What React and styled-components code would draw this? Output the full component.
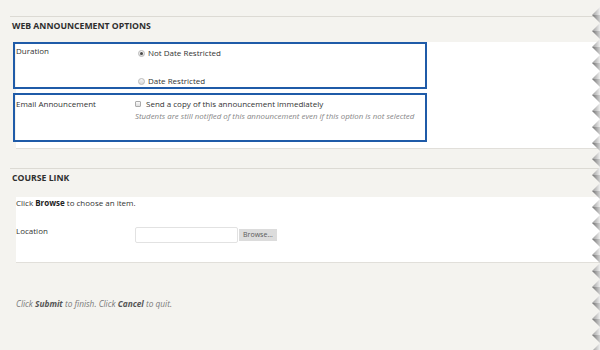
import React from "react";
import styled, { createGlobalStyle } from "styled-components";

const Global = createGlobalStyle`
  html, body { margin: 0; padding: 0; background: #f4f3ef; }
  body { font-family: "Open Sans", "DejaVu Sans", sans-serif; color: #333; }
  * { box-sizing: border-box; }
`;

const Page = styled.div`
  position: relative;
  width: 600px;
  height: 350px;
  overflow: hidden;
  background: #f4f3ef;
`;

const Main = styled.div`
  padding-top: 16px;
  display: flex;
  flex-direction: column;
`;

const SectionRule = styled.div`
  margin-left: 10px;
  margin-top: ${(p) => p.$gap || 0}px;
  border-top: 1px solid #dcdad4;
`;

const SectionTitle = styled.h2`
  margin: 0;
  height: ${(p) => p.$h}px;
  padding: 2px 0 0 12px;
  font-size: 8.7px;
  line-height: 14px;
  font-weight: 700;
  color: #2e2e2e;
  text-transform: uppercase;
`;

const Panel = styled.div`
  margin-left: 16px;
  background: #fff;
  border-bottom: 1px solid #e1dfda;
  padding-bottom: ${(p) => p.$pb}px;
  display: flex;
  flex-direction: column;
`;

const FieldBox = styled.div`
  margin-left: -3px;
  margin-top: ${(p) => p.$mt || 0}px;
  width: 414px;
  height: ${(p) => p.$h}px;
  border: 2px solid #1f5ba8;
  display: flex;
  align-items: flex-start;
`;

const Label = styled.div`
  width: 120px;
  flex: none;
  padding: ${(p) => p.$pt || 0}px 0 0 1px;
  font-size: 8px;
  line-height: 12px;
  color: #333;
`;

const Options = styled.div`
  display: flex;
  flex-direction: column;
  gap: ${(p) => p.$gap || 0}px;
  padding-top: 3px;
`;

const OptionRow = styled.label`
  display: flex;
  align-items: center;
  height: 12px;
  font-size: 8px;
  line-height: 12px;
  color: #333;
`;

const Radio = styled.span`
  position: relative;
  width: 7px;
  height: 7px;
  margin: 0 3px 0 3px;
  border-radius: 50%;
  border: 1px solid #b9b9b9;
  background: linear-gradient(#f7f7f7, #d9d9d9);
  flex: none;
  &::after {
    content: "";
    display: ${(p) => (p.$checked ? "block" : "none")};
    position: absolute;
    left: 1px;
    top: 1px;
    width: 3px;
    height: 3px;
    border-radius: 50%;
    background: #4a4a4a;
  }
`;

const Checkbox = styled.span`
  width: 6px;
  height: 6px;
  margin-right: 5px;
  border: 1px solid #ababab;
  border-radius: 1px;
  background: linear-gradient(#fbfbfb, #dedede);
  flex: none;
`;

const Note = styled.div`
  font-size: 7.9px;
  line-height: 12px;
  font-style: italic;
  color: #858585;
`;

const Intro = styled.div`
  font-size: 8px;
  line-height: 11px;
  color: #333;
  b { font-weight: 700; color: #222; }
`;

const FieldRow = styled.div`
  display: flex;
  align-items: flex-start;
  margin-top: 17px;
`;

const RowLabel = styled.div`
  width: 119px;
  flex: none;
  font-size: 8px;
  line-height: 12px;
  color: #333;
`;

const FileControl = styled.div`
  display: flex;
  align-items: center;
  margin-top: 2px;
`;

const TextInput = styled.div`
  width: 103px;
  height: 16px;
  border: 1px solid #e2e2e2;
  border-radius: 2px;
  background: #fff;
`;

const BrowseButton = styled.button`
  width: 38px;
  height: 12px;
  margin-left: 1px;
  padding: 0;
  border: none;
  background: #dcdcdc;
  color: #5a5a5a;
  font-family: "Open Sans", sans-serif;
  font-size: 7px;
  line-height: 12px;
`;

const Footer = styled.div`
  margin-top: 35px;
  padding-left: 16px;
  font-size: 8.3px;
  line-height: 12px;
  font-style: italic;
  color: #7a7a7a;
  b { font-weight: 700; color: #555; }
`;

const Edge = styled.svg`
  position: absolute;
  top: 7px;
  right: 0;
  width: 10px;
  height: 343px;
`;

function TornEdge() {
  return (
    <Edge viewBox="0 0 10 343" preserveAspectRatio="none">
      <defs>
        <linearGradient id="up" x1="0" x2="1" y1="0" y2="0">
          <stop offset="0" stopColor="#9a9a9a" />
          <stop offset="1" stopColor="#eeeeee" />
        </linearGradient>
        <linearGradient id="dn" x1="0" x2="1" y1="0" y2="0">
          <stop offset="0" stopColor="#6f6f6f" />
          <stop offset="1" stopColor="#d0d0d0" />
        </linearGradient>
        <pattern id="teeth" width="10" height="16" patternUnits="userSpaceOnUse">
          <polygon points="10,0 2,8 10,8" fill="url(#up)" />
          <polygon points="2,8 10,8 10,16" fill="url(#dn)" />
        </pattern>
      </defs>
      <rect x="0" y="0" width="10" height="343" fill="url(#teeth)" />
    </Edge>
  );
}

export default function App() {
  return (
    <Page>
      <Global />
      <Main>
        <SectionRule />
        <SectionTitle $h={25}>Web Announcement Options</SectionTitle>
        <Panel $pb={6}>
          <FieldBox $h={47}>
            <Label $pt={1}>Duration</Label>
            <Options $gap={16}>
              <OptionRow>
                <Radio $checked />
                Not Date Restricted
              </OptionRow>
              <OptionRow>
                <Radio />
                Date Restricted
              </OptionRow>
            </Options>
          </FieldBox>
          <FieldBox $h={49} $mt={4}>
            <Label $pt={3}>Email Announcement</Label>
            <Options>
              <OptionRow>
                <Checkbox />
                Send a copy of this announcement immediately
              </OptionRow>
              <Note>Students are still notified of this announcement even if this option is not selected</Note>
            </Options>
          </FieldBox>
        </Panel>

        <SectionRule $gap={19} />
        <SectionTitle $h={28}>Course Link</SectionTitle>
        <Panel $pb={19}>
          <Intro>
            Click <b>Browse</b> to choose an item.
          </Intro>
          <FieldRow>
            <RowLabel>Location</RowLabel>
            <FileControl>
              <TextInput />
              <BrowseButton type="button">Browse...</BrowseButton>
            </FileControl>
          </FieldRow>
        </Panel>

        <Footer>
          Click <b>Submit</b> to finish. Click <b>Cancel</b> to quit.
        </Footer>
      </Main>
      <TornEdge />
    </Page>
  );
}
